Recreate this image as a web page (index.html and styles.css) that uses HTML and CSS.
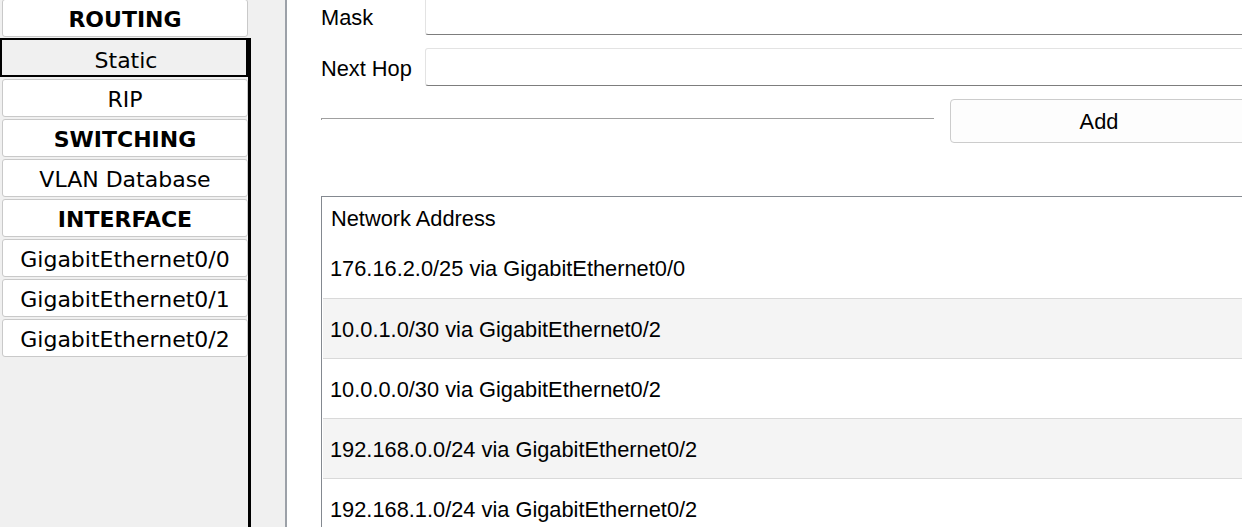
FILE: index.html
```html
<!DOCTYPE html>
<html lang="en">
<head>
<meta charset="utf-8">
<title>Static Routing</title>
<link rel="stylesheet" href="styles.css">
</head>
<body>
<div class="app">
  <nav class="sidebar">
    <div class="nav-top">
      <div class="nav-item heading">ROUTING</div>
    </div>
    <div class="nav-rest">
      <div class="nav-item active">Static</div>
      <div class="nav-item">RIP</div>
      <div class="nav-item heading">SWITCHING</div>
      <div class="nav-item">VLAN Database</div>
      <div class="nav-item heading">INTERFACE</div>
      <div class="nav-item">GigabitEthernet0/0</div>
      <div class="nav-item">GigabitEthernet0/1</div>
      <div class="nav-item">GigabitEthernet0/2</div>
    </div>
  </nav>
  <section class="panel">
    <div class="main">
      <div class="content">
        <div class="form">
          <label class="label">Mask</label>
          <div class="input"></div>
          <label class="label">Next Hop</label>
          <div class="input"></div>
        </div>
        <div class="actions">
          <div class="rule"></div>
          <button class="btn">Add</button>
        </div>
        <div class="list">
          <div class="list-head">Network Address</div>
          <div class="row">176.16.2.0/25 via GigabitEthernet0/0</div>
          <div class="row alt">10.0.1.0/30 via GigabitEthernet0/2</div>
          <div class="row">10.0.0.0/30 via GigabitEthernet0/2</div>
          <div class="row alt">192.168.0.0/24 via GigabitEthernet0/2</div>
          <div class="row">192.168.1.0/24 via GigabitEthernet0/2</div>
        </div>
      </div>
    </div>
  </section>
</div>
</body>
</html>
```
FILE: styles.css
```css
html, body {
  margin: 0;
  padding: 0;
  width: 1242px;
  height: 527px;
  overflow: hidden;
  background: #f0f0f0;
}

.app {
  display: flex;
  height: 527px;
  overflow: hidden;
}

/* ---------- sidebar ---------- */
.sidebar {
  width: 251px;
  flex-shrink: 0;
  display: flex;
  flex-direction: column;
  margin-top: -1px;
  background: #f0f0f0;
  font-family: "DejaVu Sans", Verdana, sans-serif;
  font-size: 22px;
  color: #000;
}

.nav-top {
  padding: 0 3px 0 2px;
}

.nav-rest {
  flex: 1;
  margin-top: 1px;
  padding-left: 2px;
  border-right: 3px solid #000;
  display: flex;
  flex-direction: column;
  gap: 2px;
}

.nav-item {
  box-sizing: border-box;
  width: 246px;
  height: 38px;
  border: 1px solid #c9c9c9;
  border-radius: 3px;
  background: #fff;
  display: flex;
  align-items: center;
  justify-content: center;
  padding-top: 3px;
  white-space: nowrap;
}

.nav-item.heading {
  font-weight: bold;
}

.nav-item.active {
  margin-left: -2px;
  width: 248px;
  height: 39px;
  border: 2px solid #000;
  border-radius: 0;
  background: #f0f0f0;
  padding-top: 5px;
  padding-left: 4px;
}

/* ---------- main panel ---------- */
.panel {
  flex: 1;
  padding-left: 34px;
  background: #f0f0f0;
  display: flex;
  overflow: hidden;
}

.main {
  flex: 1;
  border-left: 2px solid #9ca1a8;
  background: #fff;
  padding-left: 34px;
  overflow: hidden;
  font-family: "Liberation Sans", Arial, sans-serif;
  font-size: 21.8px;
  color: #000;
}

.content {
  width: 927px;
}

.form {
  display: grid;
  grid-template-columns: 104px 1fr;
  grid-auto-rows: 38px;
  row-gap: 13px;
  margin-top: -3px;
}

.label {
  display: flex;
  align-items: center;
  padding-top: 3px;
  white-space: nowrap;
}

.input {
  box-sizing: border-box;
  border: 1px solid #e3e3e3;
  border-bottom: 1px solid #7d7d7d;
  border-radius: 3px;
  background: #fff;
}

.actions {
  display: flex;
  gap: 16px;
  margin-top: 13px;
  height: 44px;
}

.rule {
  flex: 1;
  box-sizing: border-box;
  height: 2px;
  margin-top: 19px;
  border-top: 1px solid #a0a0a0;
  border-left: 1px solid #a0a0a0;
}

.btn {
  box-sizing: border-box;
  width: 298px;
  height: 44px;
  border: 1px solid #cccccc;
  border-radius: 4px;
  background: #fdfdfd;
  font-family: "Liberation Sans", Arial, sans-serif;
  font-size: 21.8px;
  color: #000;
  padding: 2px 0 0;
}

.list {
  margin-top: 53px;
  border-top: 1px solid #848990;
  border-left: 1px solid #848990;
  padding-left: 1px;
  height: 400px;
}

.list-head {
  box-sizing: border-box;
  height: 41px;
  display: flex;
  align-items: center;
  padding-left: 8px;
  padding-top: 2px;
  white-space: nowrap;
}

.row {
  box-sizing: border-box;
  height: 60px;
  display: flex;
  align-items: center;
  padding-left: 7px;
  padding-top: 2px;
  white-space: nowrap;
  background: #fff;
}

.row + .row {
  border-top: 1px solid #d9d9d9;
}

.row.alt {
  background: #f4f4f4;
}
```
